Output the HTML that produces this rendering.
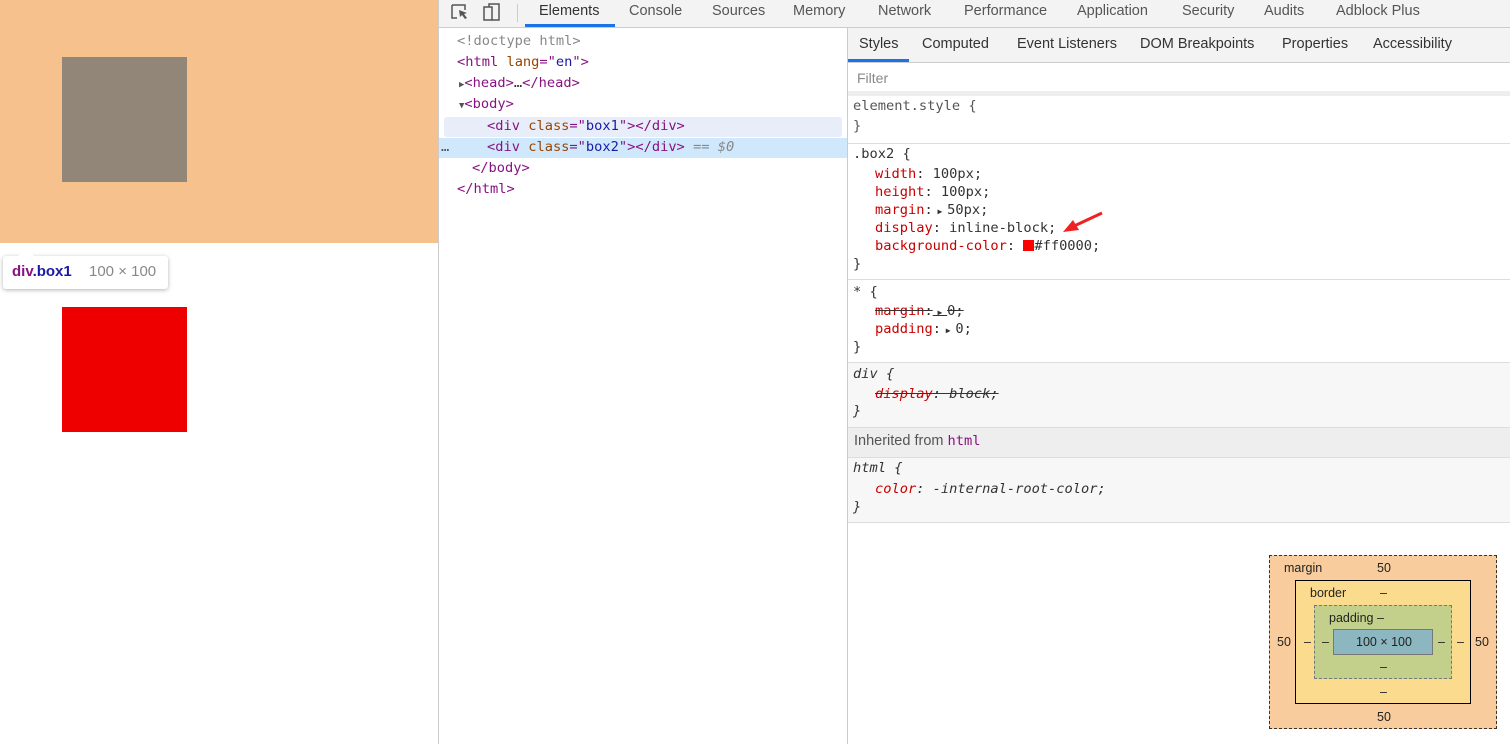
<!DOCTYPE html>
<html><head><meta charset="utf-8"><style>
*{margin:0;padding:0;box-sizing:border-box}
body{width:1510px;height:744px;position:relative;overflow:hidden;background:#fff;font-family:"Liberation Sans","DejaVu Sans",sans-serif;font-size:14.5px;color:#333}
.a{position:absolute;white-space:nowrap}
.m{font-family:"DejaVu Sans Mono","Liberation Mono",monospace;font-size:13.7px}
.tag{color:#881280}.at{color:#994500}.av{color:#1a1aa6}.pn{color:#c80000}.g{color:#888}
.sep{position:absolute;left:848px;right:0;height:1px;background:#ddd}
</style></head><body>
<div class="a" style="left:0;top:0;width:438px;height:243px;background:#f7c18e"></div>
<div class="a" style="left:62px;top:57px;width:125px;height:125px;background:#918678"></div>
<div class="a" style="left:62px;top:307px;width:125px;height:125px;background:#ee0000"></div>
<div class="a" style="left:3px;top:256px;width:165px;height:33px;background:#fff;border-radius:3px;box-shadow:0 1px 4px rgba(0,0,0,.3)"></div>
<div class="a" style="left:18px;top:248px;width:0;height:0;border-left:8px solid transparent;border-right:8px solid transparent;border-bottom:8px solid #fff"></div>
<div class="a" style="left:12px;top:263px;font-size:15px;font-weight:bold;color:#881280">div<span style="color:#1a1aa6">.box1</span></div>
<div class="a" style="left:89px;top:263px;font-size:15px;color:#888">100 × 100</div>
<div class="a" style="left:438px;top:0;width:1px;height:744px;background:#ccc"></div>
<div class="a" style="left:847px;top:28px;width:1px;height:716px;background:#ccc"></div>
<div class="a" style="left:439px;top:0;right:0;height:28px;background:#f3f3f3;border-bottom:1px solid #ccc"></div>
<svg class="a" style="left:450px;top:2px" width="60" height="20"><path d="M2 3h13v5M2 3v13h5" fill="none" stroke="#555" stroke-width="1.5"/><path d="M9 8l8 3-3 1 3 4-2 1-3-4-2 2z" fill="#555"/><rect x="34" y="5" width="8" height="13" fill="none" stroke="#555" stroke-width="1.5"/><path d="M39 5V2h10v16h-7" fill="none" stroke="#555" stroke-width="1.5"/></svg>
<div class="a" style="left:517px;top:4px;width:1px;height:18px;background:#ccc"></div>
<div class="a" style="left:525px;top:24px;width:90px;height:3px;background:#1a73e8"></div>
<div class="a" style="top:3px;left:539px;color:#333">Elements</div>
<div class="a" style="top:3px;left:629px;color:#555">Console</div>
<div class="a" style="top:3px;left:712px;color:#555">Sources</div>
<div class="a" style="top:3px;left:793px;color:#555">Memory</div>
<div class="a" style="top:3px;left:878px;color:#555">Network</div>
<div class="a" style="top:3px;left:964px;color:#555">Performance</div>
<div class="a" style="top:3px;left:1077px;color:#555">Application</div>
<div class="a" style="top:3px;left:1182px;color:#555">Security</div>
<div class="a" style="top:3px;left:1264px;color:#555">Audits</div>
<div class="a" style="top:3px;left:1336px;color:#555">Adblock Plus</div>
<div class="a" style="left:444px;top:117px;width:398px;height:20px;background:#e8eef9;border-radius:3px"></div>
<div class="a" style="left:439px;top:138px;width:408px;height:20px;background:#cfe8fc"></div>
<div class="a m g" style="left:457px;top:33px">&lt;!doctype html&gt;</div>
<div class="a m" style="left:457px;top:54px"><span class="tag">&lt;html</span> <span class="at">lang</span><span class="tag">="</span><span class="av">en</span><span class="tag">"&gt;</span></div>
<div class="a m" style="left:459px;top:75px"><span style="font-size:9px;color:#555">▶</span><span class="tag">&lt;head&gt;</span>…<span class="tag">&lt;/head&gt;</span></div>
<div class="a m" style="left:459px;top:96px"><span style="font-size:9px;color:#555">▼</span><span class="tag">&lt;body&gt;</span></div>
<div class="a m" style="left:487px;top:118px"><span class="tag">&lt;div</span> <span class="at">class</span><span class="tag">="</span><span class="av">box1</span><span class="tag">"&gt;&lt;/div&gt;</span></div>
<div class="a m" style="left:441px;top:139px;color:#555">…</div>
<div class="a m" style="left:487px;top:139px"><span class="tag">&lt;div</span> <span class="at">class</span><span class="tag">="</span><span class="av">box2</span><span class="tag">"&gt;&lt;/div&gt;</span> <i class="g">== $0</i></div>
<div class="a m tag" style="left:472px;top:160px">&lt;/body&gt;</div>
<div class="a m tag" style="left:457px;top:181px">&lt;/html&gt;</div>
<div class="a" style="left:848px;top:28px;right:0;height:35px;background:#f3f3f3;border-bottom:1px solid #ccc"></div>
<div class="a" style="left:848px;top:59px;width:61px;height:3px;background:#1a73e8"></div>
<div class="a" style="top:36px;left:859px;color:#333">Styles</div>
<div class="a" style="top:36px;left:922px;color:#333">Computed</div>
<div class="a" style="top:36px;left:1017px;color:#333">Event Listeners</div>
<div class="a" style="top:36px;left:1140px;color:#333">DOM Breakpoints</div>
<div class="a" style="top:36px;left:1282px;color:#333">Properties</div>
<div class="a" style="top:36px;left:1373px;color:#333">Accessibility</div>
<div class="a" style="top:70px;left:857px;color:#888;font-size:14px">Filter</div>
<div class="a" style="left:848px;top:91px;right:0;height:5px;background:#eee"></div>
<div class="a m" style="left:853px;top:98px;color:#555">element.style {</div>
<div class="a m" style="left:853px;top:118px;color:#555">}</div>
<div class="sep" style="top:143px"></div>
<div class="a m" style="left:853px;top:146px;color:#333">.box2 {</div>
<div class="a m" style="left:875px;top:166px"><span class="pn">width</span>: 100px;</div>
<div class="a m" style="left:875px;top:184px"><span class="pn">height</span>: 100px;</div>
<div class="a m" style="left:875px;top:202px"><span class="pn">margin</span>:<span style="font-size:8px"> ▶ </span>50px;</div>
<div class="a m" style="left:875px;top:220px"><span class="pn">display</span>: inline-block;</div>
<div class="a m" style="left:875px;top:238px"><span class="pn">background-color</span>: <span style="display:inline-block;width:11px;height:11px;background:#f00;vertical-align:-1px"></span>#ff0000;</div>
<div class="a m" style="left:853px;top:256px">}</div>
<svg class="a" style="left:1060px;top:210px" width="46" height="26"><path d="M42 3L12 17" stroke="#ee2222" stroke-width="3"/><path d="M3 22l10-12 6 10z" fill="#ee2222"/></svg>
<div class="sep" style="top:279px"></div>
<div class="a m" style="left:853px;top:284px">* {</div>
<div class="a m" style="left:875px;top:303px;text-decoration:line-through"><span class="pn">margin</span>:<span style="font-size:8px"> ▶ </span>0;</div>
<div class="a m" style="left:875px;top:321px"><span class="pn">padding</span>:<span style="font-size:8px"> ▶ </span>0;</div>
<div class="a m" style="left:853px;top:339px">}</div>
<div class="sep" style="top:362px"></div>
<div class="a" style="left:848px;top:363px;right:0;height:64px;background:#f7f7f7"></div>
<div class="a m" style="left:853px;top:366px;font-style:italic">div {</div>
<div class="a m" style="left:875px;top:386px;font-style:italic;text-decoration:line-through"><span class="pn">display</span>: block;</div>
<div class="a m" style="left:853px;top:403px;font-style:italic">}</div>
<div class="a" style="left:848px;top:427px;right:0;height:31px;background:#eee;border-top:1px solid #ddd;border-bottom:1px solid #ddd"></div>
<div class="a" style="left:854px;top:433px;color:#555">Inherited from <span class="m tag">html</span></div>
<div class="a" style="left:848px;top:458px;right:0;height:64px;background:#f7f7f7"></div>
<div class="a m" style="left:853px;top:460px;font-style:italic">html {</div>
<div class="a m" style="left:875px;top:481px;font-style:italic"><span class="pn">color</span>: -internal-root-color;</div>
<div class="a m" style="left:853px;top:499px;font-style:italic">}</div>
<div class="sep" style="top:522px"></div>
<div class="a" style="left:1269px;top:555px;width:228px;height:174px;background:#f9cc9d;border:1px dashed #333"></div>
<div class="a" style="left:1295px;top:580px;width:176px;height:124px;background:#fbdc8e;border:1px solid #000"></div>
<div class="a" style="left:1314px;top:605px;width:138px;height:74px;background:#c3d08b;border:1px dashed #777"></div>
<div class="a" style="left:1333px;top:629px;width:100px;height:26px;background:#8cb6c0;border:1px solid #777"></div>
<div style="font-size:12.5px;color:#222">
<div class="a" style="left:1284px;top:561px">margin</div>
<div class="a" style="left:1377px;top:561px">50</div>
<div class="a" style="left:1310px;top:586px">border</div>
<div class="a" style="left:1380px;top:586px">–</div>
<div class="a" style="left:1329px;top:611px">padding –</div>
<div class="a" style="left:1356px;top:635px">100 × 100</div>
<div class="a" style="left:1277px;top:635px">50</div>
<div class="a" style="left:1475px;top:635px">50</div>
<div class="a" style="left:1304px;top:635px">–</div>
<div class="a" style="left:1322px;top:635px">–</div>
<div class="a" style="left:1438px;top:635px">–</div>
<div class="a" style="left:1457px;top:635px">–</div>
<div class="a" style="left:1380px;top:660px">–</div>
<div class="a" style="left:1380px;top:685px">–</div>
<div class="a" style="left:1377px;top:710px">50</div>
</div>
</body></html>
